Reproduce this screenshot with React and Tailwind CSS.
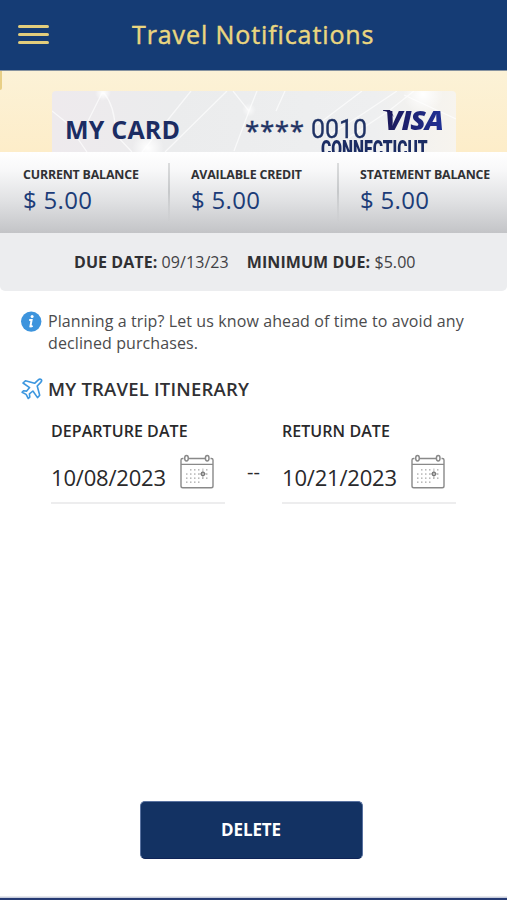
import React from "react";

function Plane() {
  return (
    <svg className="block h-[22px] w-[22px] shrink-0" viewBox="0 0 22 22" fill="none" stroke="#3d97df" strokeWidth="1.6" strokeLinejoin="round" strokeLinecap="round">
      <path d="M20.3 1.7c-.9-.8-2.3-.5-3.3.4l-3.4 3.2L4.4 2.8 2 5l6.6 4.6-2.9 3.5-3.2-.4-1.4 1.5 4 2.2 2.2 4.1 1.5-1.4-.4-3.2 3.5-2.9 4.6 6.6 2.2-2.4-2.5-9.2 3.3-3.4c.8-.9 1.7-2.1.8-2.9Z" />
    </svg>
  );
}

function Info() {
  return (
    <svg className="mt-[11px] block h-[21px] w-[21px] shrink-0" viewBox="0 0 21 21">
      <circle cx="10.2" cy="10.6" r="10.2" fill="#3d94dd" />
      <circle cx="11.1" cy="5.4" r="1.5" fill="#fff" />
      <path d="M8.2 8.9h2.4l-1.2 6.5q.8.2 2.2-.6" fill="none" stroke="#fff" strokeWidth="2" />
    </svg>
  );
}

function Calendar() {
  return (
    <svg className="block h-[36px] w-[36px] shrink-0" viewBox="0 0 36 36" fill="none" stroke="#898989">
      <path d="M4.5 4.5H3.6Q2 4.5 2 6.1v25.8q0 1.8 1.8 1.8h28.4q1.8 0 1.8-1.8V6.1q0-1.6-1.6-1.6h-.9M9.5 4.5h17M2 10.4h32" strokeWidth="1.4" />
      <ellipse cx="7.5" cy="4.3" rx="1.8" ry="2.7" strokeWidth="1.5" />
      <ellipse cx="28.2" cy="4.3" rx="1.8" ry="2.7" strokeWidth="1.5" />
      <g fill="#aaa" stroke="none">
        {[11, 15, 19, 27].map((x) => <rect key={x} x={x} y="15.2" width="1.5" height="1.3" />)}
        {[7, 11, 15, 19, 27].map((x) => <rect key={x} x={x} y="19.4" width="1.5" height="1.3" />)}
        {[7, 11, 15, 19, 23, 27].map((x) => <rect key={x} x={x} y="23.5" width="1.5" height="1.3" />)}
        {[7, 11, 15, 19].map((x) => <rect key={x} x={x} y="27.5" width="1.5" height="1.3" />)}
      </g>
      <path d="M23.9 14.5v10M20.5 19.9h7" strokeWidth=".9" stroke="#aaa" />
      <circle cx="23.9" cy="19.9" r="1.7" strokeWidth="1.2" stroke="#777" />
    </svg>
  );
}

function CardPattern() {
  return (
    <svg className="absolute inset-0 h-full w-full" viewBox="0 0 404 61" preserveAspectRatio="none">
      <defs>
        <linearGradient id="cardBg">
          <stop offset="0" stopColor="#eeeaed" />
          <stop offset=".3" stopColor="#ebeced" />
          <stop offset=".8" stopColor="#eeeff0" />
          <stop offset="1" stopColor="#f7f4ee" />
        </linearGradient>
        <radialGradient id="glow">
          <stop offset="0" stopColor="#fff" />
          <stop offset="1" stopColor="#fff" stopOpacity="0" />
        </radialGradient>
      </defs>
      <rect width="404" height="61" fill="url(#cardBg)" />
      <g stroke="#fff" fill="none" strokeWidth="1.3" opacity=".65">
        <path d="M0 20 15 32 35 61M50 2 30 42M52 2q12 15 11 41L80 61M139 0 90 61M175 0l-62 61M181 0l16 20-15 40M205 0l-8 20M233 0l-9 20M345 0l-33 22-38 24M310 0l-45 34M362 0l-24 19-60 40M352 4l52 24" />
      </g>
      <circle cx="51" cy="2" r="8" fill="url(#glow)" />
      <circle cx="96" cy="57" r="16" fill="url(#glow)" />
      <circle cx="371" cy="3" r="20" fill="url(#glow)" />
      <circle cx="197" cy="19" r="7" fill="url(#glow)" opacity=".7" />
    </svg>
  );
}

function Balance({ label, divider, width }) {
  return (
    <div className={`relative flex flex-col items-start pl-[23px] pt-[14px] ${width}`}>
      {divider && <div className="absolute left-0 top-[11px] h-[58px] w-[1.5px] bg-gradient-to-b from-[#dcddde] via-[#c6c8ca] to-[#c9cacc]/20" />}
      <div className="whitespace-nowrap text-[12.4px] font-bold leading-[18px] tracking-[-0.18px] text-[#303134]">{label}</div>
      <div className="mt-px whitespace-nowrap text-[24px] leading-[30px] tracking-[0.3px] text-[#1c3c78]">$ 5.00</div>
    </div>
  );
}

function DateField({ label, value }) {
  return (
    <div className="w-[174px]">
      <div className="whitespace-nowrap text-[16px] font-semibold leading-[22px] tracking-[0.06px] text-[#29292b]">{label}</div>
      <div className="mt-[12px] flex h-[50px] items-start justify-between border-b-2 border-[#ededee] pr-[10px]">
        <div className="mt-[8px] whitespace-nowrap text-[22px] leading-[30px] tracking-[-0.2px] text-[#29292b]">{value}</div>
        <Calendar />
      </div>
    </div>
  );
}

export default function App() {
  return (
    <div className="flex h-[900px] w-[507px] flex-col overflow-hidden bg-white font-['Open_Sans',sans-serif]">
      <header className="flex h-[71px] shrink-0 items-center border-b border-[#8793a0] bg-[#153c75] pl-[18px]">
        <div className="mb-[2px] flex w-[31px] flex-col gap-[5px]">
          <div className="h-[3px] rounded bg-[#e2cd7c]" />
          <div className="h-[3px] rounded bg-[#e2cd7c]" />
          <div className="h-[3px] rounded bg-[#e2cd7c]" />
        </div>
        <h1 className="mb-[2px] ml-[83px] whitespace-nowrap text-[25px] font-normal leading-[34px] tracking-[0.9px] text-[#ead67f] [-webkit-text-stroke:0.45px_#ead67f]">Travel Notifications</h1>
      </header>

      <section className="relative h-[81px] shrink-0 overflow-hidden bg-gradient-to-b from-[#fcf2d7] to-[#fdedc9] pl-[52px] pt-[20px]">
        <div className="absolute left-0 top-0 h-[19px] w-[2px] rounded-br bg-[#e8cf86]" />
        <div className="relative flex h-[61px] w-[404px] overflow-hidden rounded-t-[4px]">
          <CardPattern />
          <div className="relative ml-[13px] mt-[22px] whitespace-nowrap text-[25px] font-bold leading-[32px] tracking-[0.2px] text-[#1b2c63]">MY CARD</div>
          <div className="absolute left-[193px] top-[23px] whitespace-nowrap text-[26px] leading-[32px] tracking-[0.6px] text-[#1f3264] [-webkit-text-stroke:0.4px_#1f3264]">****</div>
          <div className="absolute left-[259px] top-[23px] origin-left scale-x-[0.96] whitespace-nowrap font-['Roboto',sans-serif] text-[26px] leading-[30px] text-[#1f3264] [-webkit-text-stroke:0.3px_#1f3264]">0010</div>
          <div className="absolute left-[333px] top-[13px] origin-left scale-x-[1.09] whitespace-nowrap bg-gradient-to-r from-[#1b1858] to-[#20339a] bg-clip-text pr-1 text-[26px] font-extrabold italic leading-[32px] tracking-[-1px] text-transparent">VISA</div>
          <svg className="absolute left-[331px] top-[19px] h-[7px] w-[12px]" viewBox="0 0 12 7"><path d="M0 0h7l4 7Q7 2 0 .8Z" fill="#1b1858" /></svg>
          <div className="absolute left-[269px] top-[44px] origin-left scale-x-[0.65] whitespace-nowrap font-['Roboto',sans-serif] text-[24px] font-black leading-[28px] text-[#1b2c63]">CONNECTICUT</div>
        </div>
      </section>

      <section className="flex h-[81px] shrink-0 bg-[linear-gradient(to_bottom,#fff_0%,#f8f8f9_22%,#dfe0e2_62%,#c3c4c7_100%)]">
        <Balance label="CURRENT BALANCE" width="w-[168px]" />
        <Balance label="AVAILABLE CREDIT" width="w-[169px]" divider />
        <Balance label="STATEMENT BALANCE" width="w-[170px]" divider />
      </section>

      <section className="flex h-[58px] shrink-0 items-center gap-[18px] rounded-b-[5px] bg-[#ecedef] pl-[74px] text-[16px] leading-[22px] tracking-[0.07px] text-[#414144]">
        <div className="whitespace-nowrap"><b className="text-[#303033]">DUE DATE:</b> 09/13/23</div>
        <div className="whitespace-nowrap"><b className="text-[#303033]">MINIMUM DUE:</b> $5.00</div>
      </section>

      <main className="flex grow flex-col">
        <div className="flex gap-[6px] pl-[21px] pt-[9px]">
          <Info />
          <p className="mt-[11px] whitespace-nowrap text-[16px] leading-[21.5px] tracking-[0.1px] text-[#4b4b4d]">
            Planning a trip? Let us know ahead of time to avoid any<br />declined purchases.
          </p>
        </div>
        <div className="mt-[23px] flex items-center gap-[5px] pl-[21px]">
          <Plane />
          <h2 className="whitespace-nowrap text-[18.5px] font-semibold leading-[24px] tracking-[0.2px] text-[#303033]">MY TRAVEL ITINERARY</h2>
        </div>
        <div className="mt-[19px] flex pl-[51px]">
          <DateField label="DEPARTURE DATE" value="10/08/2023" />
          <div className="w-[57px] pt-[39px] text-center text-[20px] leading-[26px] text-[#29292b]">--</div>
          <DateField label="RETURN DATE" value="10/21/2023" />
        </div>
        <div className="grow" />
        <button className="mb-[37px] mr-[5px] h-[58px] w-[223px] self-center rounded-[5px] border border-[#5972a0] border-b-[#0f2458] bg-[#133263] text-[17px] font-bold leading-[24px] tracking-[-0.1px] text-white">DELETE</button>
        <div className="h-[4px] border-b-2 border-[#263a73] bg-gradient-to-b from-[#f4f4f4] to-[#b9c0d4]" />
      </main>
    </div>
  );
}
